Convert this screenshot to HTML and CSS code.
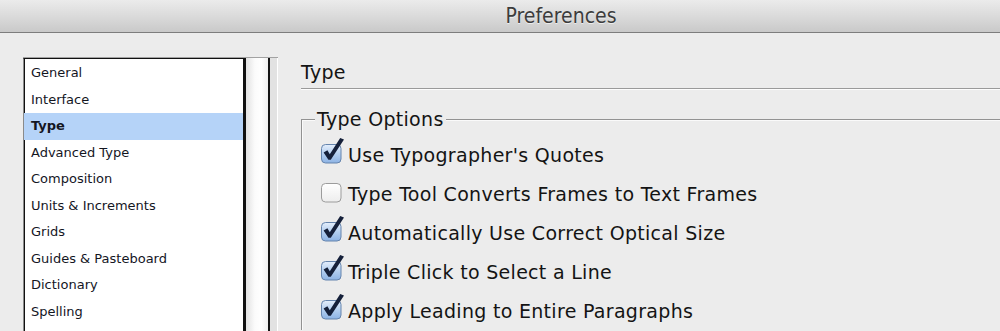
FILE: index.html
```html
<!DOCTYPE html>
<html lang="en">
<head>
    <meta charset="UTF-8">
    <title>Preferences</title>
    <link rel="stylesheet" href="styles.css">
</head>
<body>
    <header class="titlebar">
        <h1>Preferences</h1>
    </header>

    <div class="window">
        <aside class="sidebar">
            <ul class="category-list">
                <li>General</li>
                <li>Interface</li>
                <li class="selected">Type</li>
                <li>Advanced Type</li>
                <li>Composition</li>
                <li>Units &amp; Increments</li>
                <li>Grids</li>
                <li>Guides &amp; Pasteboard</li>
                <li>Dictionary</li>
                <li>Spelling</li>
            </ul>
            <div class="scroll-track"></div>
            <div class="scroll-edge"></div>
        </aside>

        <main class="panel">
            <h2 class="panel-title">Type</h2>

            <fieldset class="group">
                <legend>Type Options</legend>

                <label class="option">
                    <svg class="box checked" viewBox="0 0 24 28"><use href="#box-on"/></svg>
                    <span>Use Typographer's Quotes</span>
                </label>
                <label class="option">
                    <svg class="box" viewBox="0 0 24 28"><use href="#box-off"/></svg>
                    <span>Type Tool Converts Frames to Text Frames</span>
                </label>
                <label class="option">
                    <svg class="box checked" viewBox="0 0 24 28"><use href="#box-on"/></svg>
                    <span>Automatically Use Correct Optical Size</span>
                </label>
                <label class="option">
                    <svg class="box checked" viewBox="0 0 24 28"><use href="#box-on"/></svg>
                    <span>Triple Click to Select a Line</span>
                </label>
                <label class="option">
                    <svg class="box checked" viewBox="0 0 24 28"><use href="#box-on"/></svg>
                    <span>Apply Leading to Entire Paragraphs</span>
                </label>
            </fieldset>
        </main>
    </div>

    <!-- checkbox artwork -->
    <svg class="defs" width="0" height="0">
        <defs>
            <linearGradient id="blue" x1="0" y1="0" x2="0" y2="1">
                <stop offset="0" stop-color="#e4eefb"/>
                <stop offset="0.5" stop-color="#b4cff0"/>
                <stop offset="1" stop-color="#8db3e4"/>
            </linearGradient>
            <linearGradient id="white" x1="0" y1="0" x2="0" y2="1">
                <stop offset="0" stop-color="#ffffff"/>
                <stop offset="1" stop-color="#ededed"/>
            </linearGradient>
            <g id="box-off">
                <rect x="1.5" y="6.5" width="19.5" height="18.5" rx="4" fill="url(#white)" stroke="#9c9c9c"/>
            </g>
            <g id="box-on">
                <rect x="1.5" y="6.5" width="19.5" height="18.5" rx="4" fill="url(#blue)" stroke="#6584ad"/>
                <path d="M3.6 14.6 L7.4 12.2 L9.8 16.2 L20.2 0 L24 1.6 L10.8 21.8 L8.4 21.8 Z" fill="#15203a"/>
            </g>
        </defs>
    </svg>
</body>
</html>
```

FILE: styles.css
```css
* {
    margin: 0;
    padding: 0;
    box-sizing: border-box;
}

body {
    height: 331px;
    overflow: hidden;
    background: #ececec;
    color: #141414;
    font-family: 'DejaVu Sans', Verdana, sans-serif;
}

.titlebar {
    height: 33px;
    display: flex;
    align-items: center;
    justify-content: center;
    padding-left: 122px;
    background: linear-gradient(#ebebeb 0%, #d9d9d9 55%, #c9c9c9 100%);
    border-bottom: 1px solid #7d7d7d;
}

.titlebar h1 {
    font-family: 'DejaVu Sans Condensed', 'DejaVu Sans', sans-serif;
    font-stretch: condensed;
    font-weight: normal;
    font-size: 21px;
    color: #3c3c3c;
    text-shadow: 0 1px 0 rgba(255, 255, 255, 0.6);
}

.window {
    display: flex;
    padding: 24px 0 0 23px;
}

/* left category list */
.sidebar {
    display: flex;
    width: 255px;
    height: 280px;
    border-top: 1px solid #a2a2a2;
}

.category-list {
    list-style: none;
    width: 223px;
    background: #fff;
    border-left: 1px solid #8a8a8a;
    border-top: 1px solid #111;
    border-right: 3px solid #111;
    box-shadow: inset 1px 0 0 #111;
    padding-top: 1px;
}

.category-list li {
    height: 26.5px;
    line-height: 26.5px;
    padding-left: 7px;
    font-size: 13px;
    color: #14161f;
}

.category-list li.selected {
    background: #b5d3f8;
    font-weight: bold;
}

.scroll-track {
    width: 24px;
    background: linear-gradient(90deg, #e2e2e2 0%, #fbfbfb 40%, #ffffff 70%, #f1f1f1 100%);
    border-right: 2px solid #151515;
}

.scroll-edge {
    width: 8px;
    background: #e2e2e2;
    border-right: 1px solid #fff;
}

/* right settings panel */
.panel {
    flex: 1;
    margin-left: 23px;
    margin-top: 3px;
    letter-spacing: 0.3px;
}

.panel-title {
    font-size: 19px;
    font-weight: normal;
    line-height: 24px;
    padding-bottom: 4px;
    border-bottom: 1px solid #9a9a9a;
    box-shadow: 0 1px 0 #fdfdfd;
}

.group {
    margin-top: 18px;
    border: none;
    border-top: 1px solid #929292;
    border-left: 1px solid #929292;
    box-shadow: inset 1px 1px 0 #fafafa;
    padding: 4px 0 0 18px;
    min-width: 0;
}

.group legend {
    font-size: 19px;
    line-height: 24px;
    margin-left: -5px;
    padding: 0 2px;
    background: #ececec;
}

.option {
    display: flex;
    align-items: center;
    height: 39px;
    font-size: 19px;
    white-space: nowrap;
}

.box {
    width: 24px;
    height: 28px;
    margin-right: 4px;
    margin-top: -6px;
    overflow: visible;
    flex-shrink: 0;
}

.defs {
    position: absolute;
}
```
